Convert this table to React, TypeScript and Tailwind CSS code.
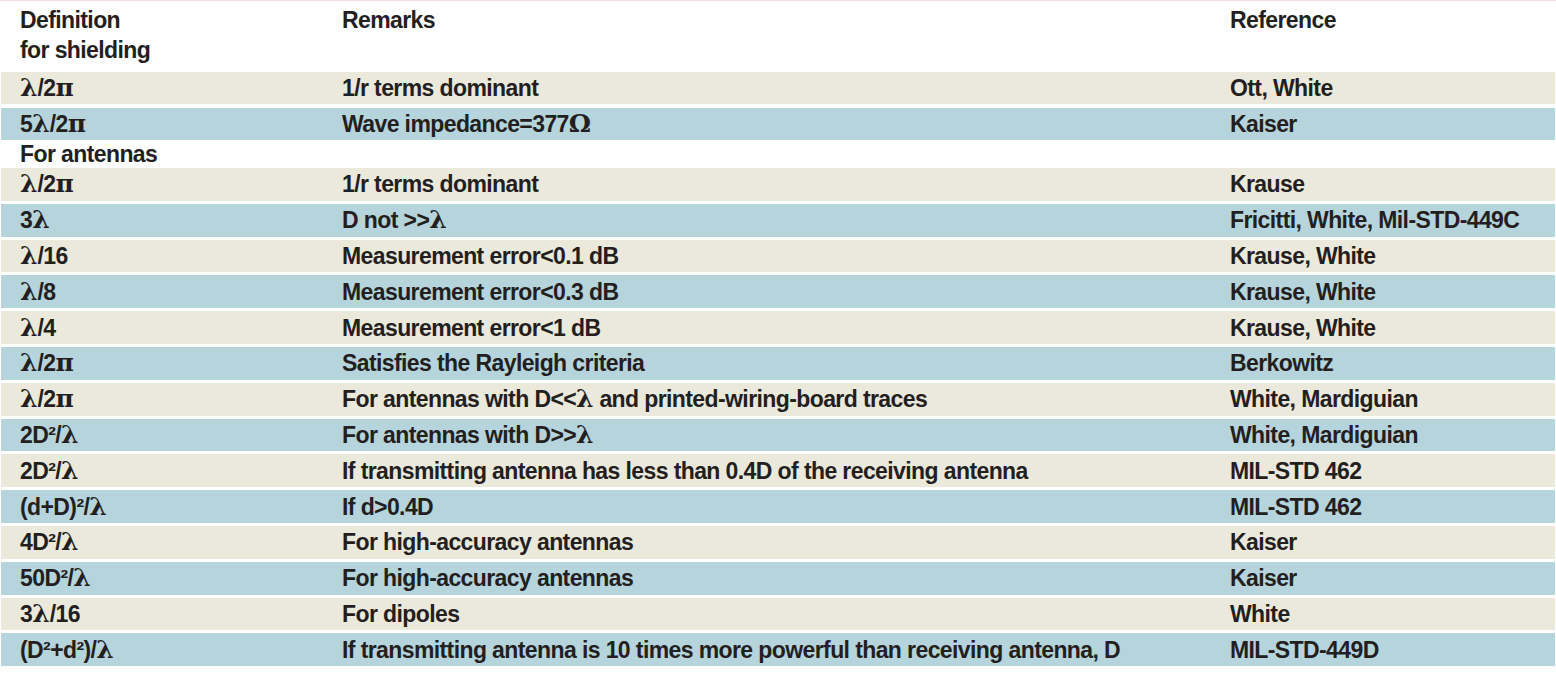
import React from 'react'

type Row = { def: React.ReactNode; remark: React.ReactNode; ref: string; tone: 'beige' | 'blue' }

// greek letters are set in a serif face, like the symbol font of the original
const G = ({ children }: { children: React.ReactNode }) => (
  <span className="font-['DejaVu_Serif','Liberation_Serif',serif] text-[25px] tracking-normal">{children}</span>
)

const L = () => <G>λ</G>
const Pi = () => <G>π</G>

const shielding: Row[] = [
  { def: <><L />/2<Pi /></>, remark: '1/r terms dominant', ref: 'Ott, White', tone: 'beige' },
  { def: <>5<L />/2<Pi /></>, remark: <>Wave impedance=377<G>Ω</G></>, ref: 'Kaiser', tone: 'blue' },
]

const antennas: Row[] = [
  { def: <><L />/2<Pi /></>, remark: '1/r terms dominant', ref: 'Krause', tone: 'beige' },
  { def: <>3<L /></>, remark: <>D not &gt;&gt;<L /></>, ref: 'Fricitti, White, Mil-STD-449C', tone: 'blue' },
  { def: <><L />/16</>, remark: 'Measurement error<0.1 dB', ref: 'Krause, White', tone: 'beige' },
  { def: <><L />/8</>, remark: 'Measurement error<0.3 dB', ref: 'Krause, White', tone: 'blue' },
  { def: <><L />/4</>, remark: 'Measurement error<1 dB', ref: 'Krause, White', tone: 'beige' },
  { def: <><L />/2<Pi /></>, remark: 'Satisfies the Rayleigh criteria', ref: 'Berkowitz', tone: 'blue' },
  { def: <><L />/2<Pi /></>, remark: <>For antennas with D&lt;&lt;<L /> and printed-wiring-board traces</>, ref: 'White, Mardiguian', tone: 'beige' },
  { def: <>2D²/<L /></>, remark: <>For antennas with D&gt;&gt;<L /></>, ref: 'White, Mardiguian', tone: 'blue' },
  { def: <>2D²/<L /></>, remark: 'If transmitting antenna has less than 0.4D of the receiving antenna', ref: 'MIL-STD 462', tone: 'beige' },
  { def: <>(d+D)²/<L /></>, remark: 'If d>0.4D', ref: 'MIL-STD 462', tone: 'blue' },
  { def: <>4D²/<L /></>, remark: 'For high-accuracy antennas', ref: 'Kaiser', tone: 'beige' },
  { def: <>50D²/<L /></>, remark: 'For high-accuracy antennas', ref: 'Kaiser', tone: 'blue' },
  { def: <>3<L />/16</>, remark: 'For dipoles', ref: 'White', tone: 'beige' },
  { def: <>(D²+d²)/<L /></>, remark: 'If transmitting antenna is 10 times more powerful than receiving antenna, D', ref: 'MIL-STD-449D', tone: 'blue' },
]

function DataRow({ row, h }: { row: Row; h: string }) {
  return (
    <div className={`flex items-center ${h} ${row.tone === 'beige' ? 'bg-[#ebe8dc]' : 'bg-[#b5d4dc]'}`}>
      <div className="w-[341px] pl-[19px] shrink-0 whitespace-nowrap">{row.def}</div>
      <div className="w-[888px] shrink-0 whitespace-nowrap">{row.remark}</div>
      <div className="flex-1 whitespace-nowrap">{row.ref}</div>
    </div>
  )
}

export default function App() {
  return (
    <div className="w-[1556px] h-[680px] bg-white text-[#231f20] font-['Liberation_Sans_Narrow','Liberation_Sans',sans-serif] font-bold text-[23px] tracking-[-0.6px] leading-[30px] overflow-hidden">
      <div className="h-[1px] bg-[#f0dcdc]" />
      <div className="ml-[1px] w-[1554px]">
        {/* Header */}
        <div className="flex pt-[4px] h-[71px]">
          <div className="w-[341px] pl-[19px] shrink-0">
            Definition
            <br />
            for shielding
          </div>
          <div className="w-[888px] shrink-0">Remarks</div>
          <div className="flex-1">Reference</div>
        </div>

        <div className="flex flex-col gap-[4px]">
          {shielding.map((r, i) => (
            <DataRow key={i} row={r} h="h-[32px]" />
          ))}
        </div>

        <div className="flex items-center h-[28px] pl-[19px]">For antennas</div>

        <div className="flex flex-col gap-[3px]">
          {antennas.map((r, i) => (
            <DataRow key={i} row={r} h="h-[32.8px]" />
          ))}
        </div>
      </div>
    </div>
  )
}
